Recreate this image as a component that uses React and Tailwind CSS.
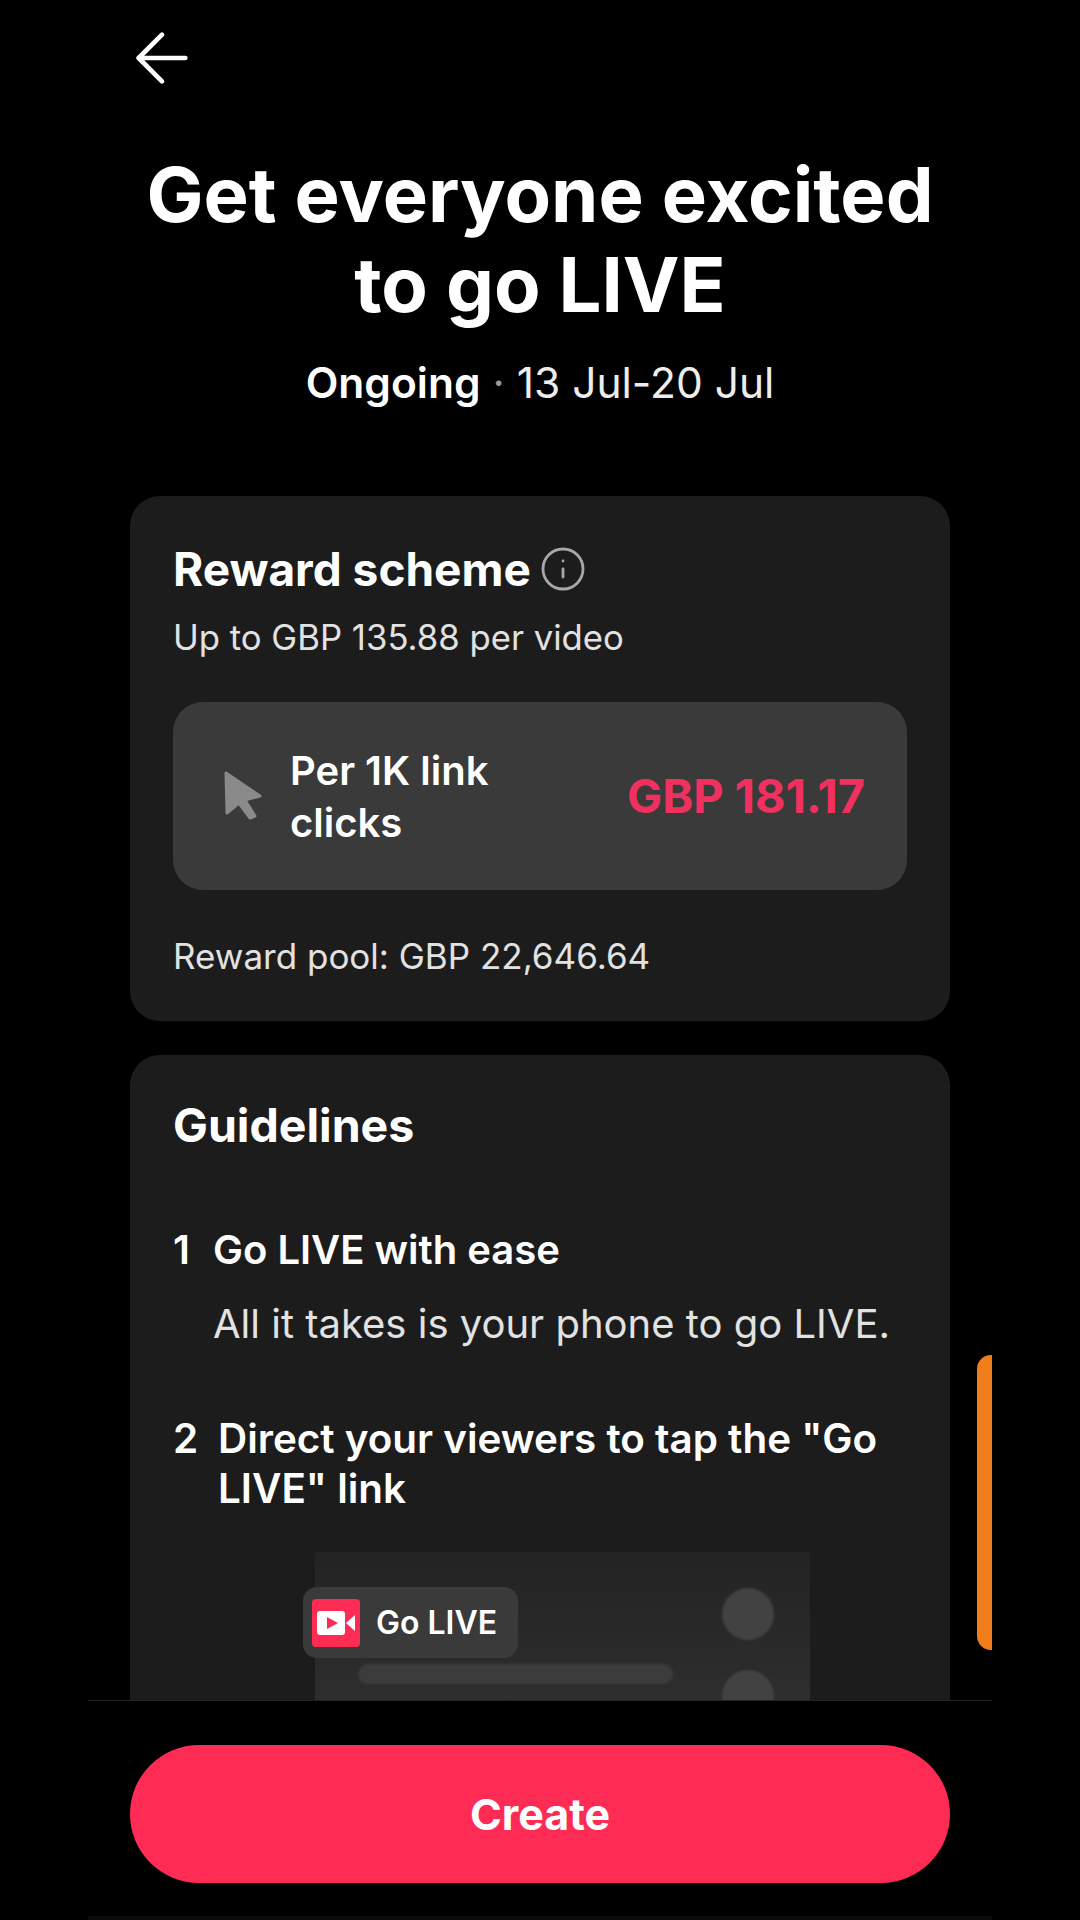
import { ArrowLeft, Info } from 'lucide-react';

function CursorIcon() {
  return (
    <svg width="40" height="52" viewBox="0 0 40 52" aria-hidden="true">
      <path d="M3 3 L37 26 L22 30 L32 46 L27 48 L16 33 L4 43 Z" fill="#8a8a8a" stroke="#8a8a8a" strokeWidth="3" strokeLinejoin="round" />
    </svg>
  );
}

function LiveIcon() {
  return (
    <span className="grid h-[48px] w-[48px] place-items-center rounded-[4px] bg-[#fe2c55]">
      <svg width="38" height="26" viewBox="0 0 38 26" aria-hidden="true">
        <rect x="0" y="1" width="28" height="24" rx="3" fill="#fff" />
        <path d="M29 13 L38 5 V21 Z" fill="#fff" />
        <path d="M10 7 L21 13 L10 19 Z" fill="#fe2c55" />
      </svg>
    </span>
  );
}

function GoLivePreview() {
  return (
    <div className="relative mt-[38px] ml-[185px] h-[148px] w-[495px] bg-linear-to-b from-[#232323] to-[#2e2e2e]">
      <div className="absolute top-[35px] left-[-12px] flex h-[71px] w-[215px] items-center gap-[16px] rounded-[14px] bg-[#3a3a3a] pl-[9px]">
        <LiveIcon />
        <span className="text-[32px] font-semibold text-white">Go LIVE</span>
      </div>
      <div className="absolute top-[112px] left-[43px] h-[20px] w-[315px] rounded-full bg-[#3c3c3c] blur-[1px]" />
      <div className="absolute top-[36px] left-[407px] h-[52px] w-[52px] rounded-full bg-[#424242] blur-[1px]" />
      <div className="absolute top-[118px] left-[407px] h-[52px] w-[52px] rounded-full bg-[#424242] blur-[1px]" />
    </div>
  );
}

export default function App() {
  return (
    <div className="flex h-[1920px] w-[1080px] flex-col overflow-hidden bg-black font-['Inter',sans-serif] text-white">
      <div className="relative mx-[88px] flex h-[1700px] flex-col overflow-hidden">
        <div className="pt-[18px] pl-[42px]">
          <ArrowLeft size={80} strokeWidth={1.4} className="ml-[-8px]" aria-hidden="true" />
        </div>

        <h1 className="mt-[51px] text-center text-[76px] leading-[90px] font-bold">
          Get everyone excited
          <br />
          to go LIVE
        </h1>
        <p className="mt-[29px] text-center text-[42.5px] leading-[50px] text-[#ededed]">
          <span className="font-semibold text-white">Ongoing</span>
          <span className="text-[#999]"> · </span>
          13 Jul-20 Jul
        </p>

        <section className="mx-[42px] mt-[88px] h-[525px] rounded-[30px] bg-[#1c1c1c] px-[43px] pt-[46px]">
          <div className="flex items-center gap-[8px]">
            <h2 className="text-[46px] leading-[54px] font-bold">Reward scheme</h2>
            <Info size={48} strokeWidth={1.4} className="text-[#a8a8a8]" aria-hidden="true" />
          </div>
          <p className="mt-[20px] text-[34.7px] leading-[42px] text-[#e2e2e2]">Up to GBP 135.88 per video</p>
          <div className="mt-[44px] flex h-[188px] items-center justify-between rounded-[30px] bg-[#3a3a3a] pr-[42px] pl-[50px]">
            <div className="flex items-center gap-[27px]">
              <CursorIcon />
              <p className="w-[220px] pt-[2px] text-[40px] leading-[52px] font-semibold">Per 1K link clicks</p>
            </div>
            <span className="text-[47px] font-bold text-[#f0315f]">GBP 181.17</span>
          </div>
          <p className="mt-[45px] text-[35px] leading-[42px] text-[#e2e2e2]">Reward pool: GBP 22,646.64</p>
        </section>

        <section className="mx-[42px] mt-[34px] flex-1 rounded-t-[30px] bg-[#1c1c1c] pt-[43px]">
          <h2 className="px-[43px] text-[46.5px] leading-[54px] font-bold">Guidelines</h2>
          <div className="mt-[73px] flex px-[43px] text-[40px] leading-[50px] font-semibold">
            <span className="w-[40px]">1</span>
            <span>Go LIVE with ease</span>
          </div>
          <p className="mt-[24px] pl-[83px] text-[40px] leading-[50px] text-[#e2e2e2]">All it takes is your phone to go LIVE.</p>
          <div className="mt-[65px] flex px-[43px] text-[40.4px] leading-[50px] font-semibold">
            <span className="w-[45px] shrink-0">2</span>
            <span>Direct your viewers to tap the "Go LIVE" link</span>
          </div>
          <GoLivePreview />
        </section>

        <div className="absolute top-[1355px] right-0 h-[295px] w-[15px] rounded-l-[14px] bg-[#f07c1a]" />
      </div>

      <footer className="mx-[88px] border-t border-[#222] pt-[44px]">
        <div className="px-[42px]">
          <button className="h-[138px] w-full rounded-full bg-[#fe2c55] text-[43px] font-bold text-white">Create</button>
        </div>
        <div className="mt-[33px] h-[4px] bg-[#0c0c0c]" />
      </footer>
    </div>
  );
}
